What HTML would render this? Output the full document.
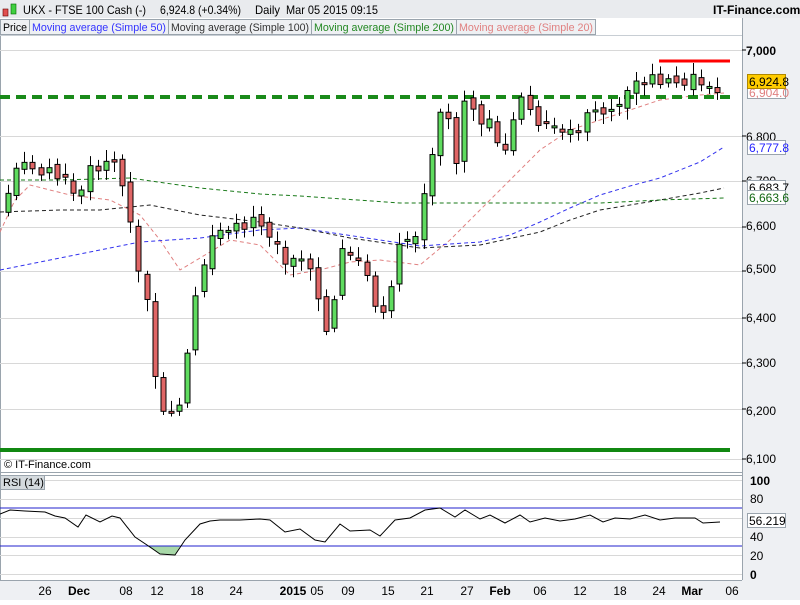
<!DOCTYPE html><html><head><style>
body{margin:0;width:800px;height:600px;overflow:hidden;background:#fff;font-family:"Liberation Sans",sans-serif}
</style></head><body>
<svg id="s" width="800" height="600" xmlns="http://www.w3.org/2000/svg" font-family="Liberation Sans, sans-serif">
<rect width="800" height="600" fill="#fff"/>
<rect x="0" y="0" width="800" height="18" fill="#e9ebee"/>
<rect x="742" y="18" width="58" height="582" fill="#eef0f3"/>
<rect x="0" y="580" width="800" height="20" fill="#eef0f3"/>
<line x1="742.5" y1="18" x2="742.5" y2="580" stroke="#9aa4ad"/>
<line x1="0" y1="580.5" x2="742" y2="580.5" stroke="#9aa4ad"/>
<line x1="0" y1="472.5" x2="742" y2="472.5" stroke="#9aa4ad"/>
<line x1="0" y1="475.5" x2="742" y2="475.5" stroke="#9aa4ad"/>
<line x1="0.5" y1="36" x2="0.5" y2="580" stroke="#9aa4ad"/>
<line x1="0" y1="35.5" x2="742" y2="35.5" stroke="#c8ced4"/>
<rect x="3" y="9" width="5" height="7" fill="#e05050" stroke="#600" stroke-width=".6"/>
<rect x="11" y="4" width="5" height="10" fill="#40d040" stroke="#060" stroke-width=".6"/>
<text x="23" y="14" font-size="12" fill="#000" textLength="123" lengthAdjust="spacingAndGlyphs">UKX - FTSE 100 Cash (-)</text>
<text x="160" y="14" font-size="12" fill="#000" textLength="81" lengthAdjust="spacingAndGlyphs">6,924.8 (+0.34%)</text>
<text x="255" y="14" font-size="12" fill="#000" textLength="25" lengthAdjust="spacingAndGlyphs">Daily</text>
<text x="286" y="14" font-size="12" fill="#000" textLength="92" lengthAdjust="spacingAndGlyphs">Mar 05 2015 09:15</text>
<text x="713" y="14" font-size="12" font-weight="bold">IT-Finance.com</text>
<g font-size="11">
<rect x="0.5" y="19.5" width="29" height="15" fill="#eef0f3" stroke="#9aa4ad"/><text x="3" y="31" textLength="24" lengthAdjust="spacingAndGlyphs">Price</text>
<rect x="29.5" y="19.5" width="139" height="15" fill="#eef0f3" stroke="#9aa4ad"/><text x="32" y="31" fill="#3333ff" textLength="134" lengthAdjust="spacingAndGlyphs">Moving average (Simple 50)</text>
<rect x="168.5" y="19.5" width="143" height="15" fill="#eef0f3" stroke="#9aa4ad"/><text x="171" y="31" fill="#333" textLength="138" lengthAdjust="spacingAndGlyphs">Moving average (Simple 100)</text>
<rect x="311.5" y="19.5" width="145" height="15" fill="#eef0f3" stroke="#9aa4ad"/><text x="314" y="31" fill="#228822" textLength="140" lengthAdjust="spacingAndGlyphs">Moving average (Simple 200)</text>
<rect x="456.5" y="19.5" width="139" height="15" fill="#eef0f3" stroke="#9aa4ad"/><text x="459" y="31" fill="#e08080" textLength="134" lengthAdjust="spacingAndGlyphs">Moving average (Simple 20)</text>
</g>
<g id="grid" stroke="#d8d8d8"></g>
<g id="ma"></g>
<line x1="0" y1="97" x2="730" y2="97" stroke="#1a8a1a" stroke-width="4" stroke-dasharray="10,6"/>
<g id="c"></g>
<line x1="659" y1="61" x2="730" y2="61" stroke="#ff0000" stroke-width="3"/>
<line x1="0" y1="450" x2="730" y2="450" stroke="#118811" stroke-width="4"/>
<text x="4" y="468" font-size="11">© IT-Finance.com</text>
<g font-size="12" fill="#000">
<text x="746" y="55" font-weight="bold">7,000</text>
<text x="746" y="141">6,800</text>
<text x="746" y="185">6,700</text>
<text x="746" y="230">6,600</text>
<text x="746" y="273">6,500</text>
<text x="746" y="322">6,400</text>
<text x="746" y="367">6,300</text>
<text x="746" y="415">6,200</text>
<text x="746" y="463">6,100</text>
</g>
<g stroke="#000"><line x1="742" y1="50" x2="746" y2="50"/><line x1="742" y1="136" x2="746" y2="136"/><line x1="742" y1="181" x2="746" y2="181"/><line x1="742" y1="227" x2="746" y2="227"/><line x1="742" y1="271" x2="746" y2="271"/><line x1="742" y1="318" x2="746" y2="318"/><line x1="742" y1="363" x2="746" y2="363"/><line x1="742" y1="409" x2="746" y2="409"/><line x1="742" y1="459" x2="746" y2="459"/></g>
<rect x="747.5" y="86.5" width="38" height="12" fill="#fff" stroke="#9aa4ad"/><text x="749" y="97" font-size="12" fill="#e08080">6,904.0</text>
<rect x="747.5" y="74.5" width="38" height="14" fill="#ffcc00" stroke="#b08800"/><text x="749" y="86" font-size="12">6,924.8</text>
<rect x="747.5" y="140.5" width="38" height="14" fill="#fff" stroke="#9aa4ad"/><text x="749" y="152" font-size="12" fill="#2222ff">6,777.8</text>
<rect x="747.5" y="180.5" width="38" height="12" fill="#fff" stroke="#9aa4ad"/><text x="749" y="192" font-size="12">6,683.7</text>
<rect x="747.5" y="190.5" width="38" height="14" fill="#fff" stroke="#9aa4ad"/><text x="749" y="202" font-size="12" fill="#116611">6,663.6</text>
<g id="rg" stroke="#d8d8d8"></g>
<polygon points="147,546 160,554 175,555 180,546" fill="#a8d8a8"/>
<line x1="0" y1="508" x2="742" y2="508" stroke="#2222cc"/>
<line x1="0" y1="546" x2="742" y2="546" stroke="#2222cc"/>
<polyline fill="none" stroke="#000" points="0,514 10,510 25,511 45,512 55,516 65,518 78,527 86,515 100,522 112,516 120,518 135,537 150,547 160,554 175,555 185,540 200,524 210,521 220,520 240,520 260,519 270,520 285,532 300,529 315,540 325,542 340,524 350,531 370,530 380,536 395,520 410,518 425,510 440,508 455,517 465,510 480,519 490,515 505,523 520,515 530,522 545,518 560,521 575,519 590,515 603,522 615,518 630,519 645,515 660,520 675,518 695,518 703,523 720,522"/>
<rect x="0.5" y="475.5" width="44" height="14" fill="#d4dade" stroke="#9aa4ad"/><text x="3" y="486" font-size="11">RSI (14)</text>
<g font-size="12"><text x="750" y="485" font-weight="bold">100</text><text x="750" y="503">80</text><text x="750" y="522">60</text><text x="750" y="541">40</text><text x="750" y="560">20</text><text x="750" y="579" font-weight="bold">0</text></g>
<rect x="747.5" y="513.5" width="38" height="14" fill="#fff" stroke="#9aa4ad"/><text x="749" y="525" font-size="12">56.219</text>
<g font-size="12" text-anchor="middle">
<text x="45" y="595">26</text><text x="79" y="595" font-weight="bold">Dec</text><text x="126" y="595">08</text><text x="157" y="595">12</text><text x="197" y="595">18</text><text x="236" y="595">24</text><text x="293" y="595" font-weight="bold">2015</text><text x="317" y="595">05</text><text x="348" y="595">09</text><text x="388" y="595">15</text><text x="427" y="595">21</text><text x="467" y="595">27</text><text x="500" y="595" font-weight="bold">Feb</text><text x="540" y="595">06</text><text x="580" y="595">12</text><text x="620" y="595">18</text><text x="659" y="595">24</text><text x="692" y="595" font-weight="bold">Mar</text><text x="732" y="595">06</text>
</g>
</svg>
<script>
var NS="http://www.w3.org/2000/svg";
function el(p,t,a){var e=document.createElementNS(NS,t);for(var k in a)e.setAttribute(k,a[k]);document.getElementById(p).appendChild(e);return e;}
[50,136,181,227,271,318,363,409,459].forEach(function(y){el('grid','line',{x1:0,y1:y+.5,x2:742,y2:y+.5});});
[480,499,518,537,555,574].forEach(function(y){el('rg','line',{x1:0,y1:y+.5,x2:742,y2:y+.5});});
function Y(p){return 50+(7000-p)*0.4544;}
function pl(pts,c,w,d){el('ma','polyline',{points:pts,fill:'none',stroke:c,'stroke-width':w,'stroke-dasharray':d});}
pl("0,232 15,200 30,185 70,195 110,200 140,215 160,240 180,270 205,255 230,240 260,245 290,275 320,270 350,262 380,260 420,265 450,240 490,200 520,170 540,150 570,130 600,120 630,110 660,100 700,95 724,93","#e08080",1,"4,3");
pl("0,270 60,258 100,250 140,242 200,238 260,230 300,228 340,234 380,240 420,246 480,242 510,235 540,222 570,208 600,195 630,186 660,178 700,162 724,147","#3333ee",1,"4,3");
pl("0,212 60,210 100,210 150,205 200,215 260,222 300,228 350,238 420,248 480,245 540,232 570,220 600,210 630,205 660,200 700,193 724,188","#222",1,"4,3");
pl("0,180 60,180 130,178 200,188 260,194 300,196 400,203 500,203 600,203 660,200 724,198","#1a7a1a",1,"4,3");
var K=[[8,6680],[15,6750],[25,6740],[45,6740],[60,6720],[75,6680],[90,6740],[108,6740],[118,6760],[125,6680],[132,6590],[140,6500],[148,6420],[157,6230],[165,6210],[175,6180],[182,6250],[190,6400],[198,6480],[206,6560],[215,6590],[225,6620],[240,6610],[255,6620],[270,6600],[280,6550],[290,6520],[300,6540],[310,6530],[318,6440],[325,6380],[335,6440],[342,6560],[350,6560],[360,6520],[370,6500],[380,6400],[388,6450],[396,6550],[405,6580],[415,6600],[425,6690],[432,6780],[440,6850],[448,6850],[456,6760],[464,6880],[472,6880],[480,6820],[490,6850],[500,6790],[508,6760],[515,6880],[525,6880],[535,6850],[545,6830],[560,6840],[570,6820],[580,6830],[590,6860],[600,6880],[610,6860],[620,6890],[630,6900],[637,6940],[650,6940],[660,6930],[670,6920],[680,6930],[690,6940],[700,6930],[710,6900],[716,6900],[724,6925]];
function P(x){for(var i=1;i<K.length;i++)if(x<=K[i][0]){var a=K[i-1],b=K[i];return a[1]+(b[1]-a[1])*(x-a[0])/(b[0]-a[0]);}return K[K.length-1][1];}
var prev=6650,n=0;
for(var x=8;x<=725;x+=8.15){n++;var c=P(x)+((n*37)%23-11)*1.5,o=prev+((n*53)%17-8)*1.2;
var hi=Math.max(o,c)+8+(n*29)%18,lo=Math.min(o,c)-8-(n*41)%20;
el('c','line',{x1:Math.round(x)+.5,y1:Y(hi),x2:Math.round(x)+.5,y2:Y(lo),stroke:'#000'});
var t=Y(Math.max(o,c)),h=Math.max(2,Y(Math.min(o,c))-t);
el('c','rect',{x:Math.round(x)-2,y:t,width:5,height:h,fill:c>=o?'#5fdc5f':'#e06666',stroke:'#000','stroke-width':1});
prev=c;}
</script>
</body></html>
